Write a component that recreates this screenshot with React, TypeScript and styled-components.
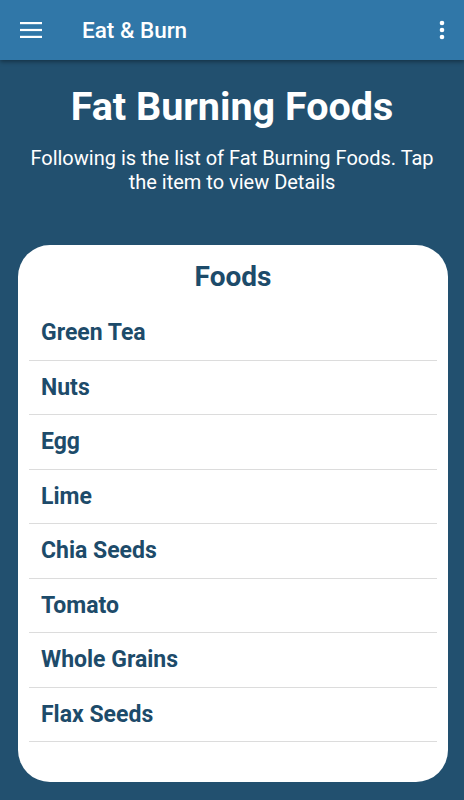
import React from 'react';
import styled, { createGlobalStyle } from 'styled-components';

const GlobalStyle = createGlobalStyle`
  html, body {
    margin: 0;
    padding: 0;
    background: #22506f;
    font-family: Roboto, "Noto Sans", sans-serif;
  }
`;

const Page = styled.div`
  display: flex;
  flex-direction: column;
  min-height: 800px;
  background: #22506f;
`;

const AppBar = styled.header`
  align-items: center;
  background: #3077a8;
  box-shadow: 0 2px 4px rgba(0, 0, 0, 0.35);
  display: flex;
  height: 60px;
  padding: 0 12px 0 20px;
  position: relative;
  z-index: 1;
`;

const IconButton = styled.button`
  align-items: center;
  background: none;
  border: none;
  display: flex;
  justify-content: center;
  padding: 0;
  cursor: pointer;
`;

const AppTitle = styled.h1`
  color: #ffffff;
  flex: 1;
  font-size: 22.5px;
  font-weight: 500;
  margin: 0 0 0 40px;
`;

const Intro = styled.section`
  padding: 25px 24px 0;
  text-align: center;
  color: #ffffff;
`;

const Title = styled.h2`
  font-size: 39.5px;
  font-weight: 700;
  line-height: 44px;
  margin: 0;
`;

const Subtitle = styled.p`
  font-size: 20px;
  line-height: 24px;
  margin: 17px 0 0;
`;

const Card = styled.div`
  background: #ffffff;
  border-radius: 32px;
  margin: 51px 16px 18px 18px;
  padding: 0 11px 40px;
`;

const CardTitle = styled.h3`
  color: #1d4b6a;
  font-size: 28px;
  font-weight: 700;
  line-height: 32px;
  margin: 0;
  padding: 16px 0 13px;
  text-align: center;
`;

const List = styled.ul`
  list-style: none;
  margin: 0;
  padding: 0;
`;

const Item = styled.li`
  align-items: center;
  border-bottom: 1px solid #dcdcdc;
  color: #1d4b6a;
  cursor: pointer;
  display: flex;
  font-size: 23px;
  font-weight: 700;
  height: 53.5px;
  padding: 0 12px;
`;

const foods = [
  'Green Tea',
  'Nuts',
  'Egg',
  'Lime',
  'Chia Seeds',
  'Tomato',
  'Whole Grains',
  'Flax Seeds',
];

function MenuIcon() {
  return (
    <svg width="22" height="16" viewBox="0 0 22 16">
      <rect x="0" y="0" width="22" height="2.2" fill="#ffffff" />
      <rect x="0" y="6.9" width="22" height="2.2" fill="#ffffff" />
      <rect x="0" y="13.8" width="22" height="2.2" fill="#ffffff" />
    </svg>
  );
}

function MoreIcon() {
  return (
    <svg width="20" height="20" viewBox="0 0 20 20">
      <circle cx="10" cy="3" r="2.3" fill="#ffffff" />
      <circle cx="10" cy="10" r="2.3" fill="#ffffff" />
      <circle cx="10" cy="17" r="2.3" fill="#ffffff" />
    </svg>
  );
}

export default function App() {
  return (
    <Page>
      <GlobalStyle />
      <AppBar>
        <IconButton aria-label="menu">
          <MenuIcon />
        </IconButton>
        <AppTitle>Eat &amp; Burn</AppTitle>
        <IconButton aria-label="more">
          <MoreIcon />
        </IconButton>
      </AppBar>
      <Intro>
        <Title>Fat Burning Foods</Title>
        <Subtitle>
          Following is the list of Fat Burning Foods. Tap the item to view Details
        </Subtitle>
      </Intro>
      <Card>
        <CardTitle>Foods</CardTitle>
        <List>
          {foods.map((food) => (
            <Item key={food}>{food}</Item>
          ))}
        </List>
      </Card>
    </Page>
  );
}
